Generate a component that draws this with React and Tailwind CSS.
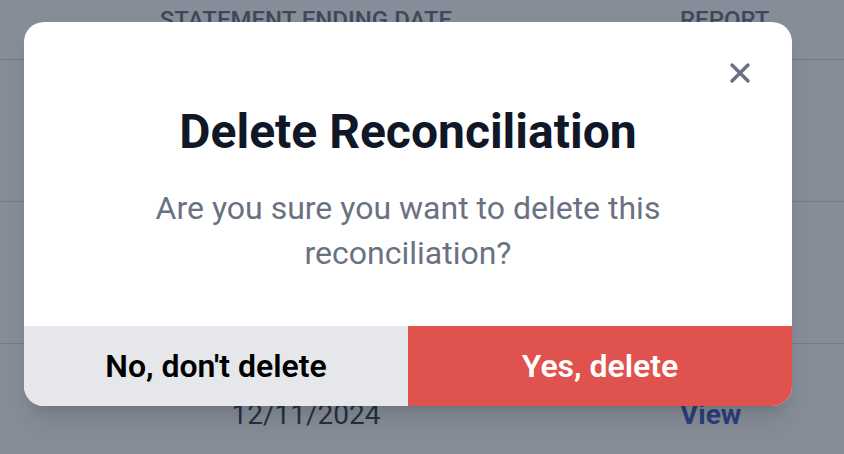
import React from 'react';

const rows = [
  { date: '', report: '' },
  { date: '', report: '' },
  { date: '12/11/2024', report: 'View' },
];

export default function App() {
  return (
    <div className="relative w-[844px] h-[454px] overflow-hidden bg-white font-['Roboto',sans-serif]">
      <div className="w-full">
        <div className="flex h-[60px] border-b border-gray-300">
          <div className="w-[612px] text-center text-[24px] font-medium text-gray-600 uppercase leading-none pt-[8px]">
            Statement Ending Date
          </div>
          <div className="flex-1 pl-[68px] text-[24px] font-medium text-gray-600 uppercase leading-none pt-[8px]">
            Report
          </div>
        </div>
        {rows.map((row, i) => (
          <div key={i} className="flex items-center h-[142px] border-b border-gray-300">
            <div className="w-[612px] text-center text-[28px] text-gray-900">{row.date}</div>
            <div className="flex-1 pl-[68px] text-[28px] font-bold text-blue-800">{row.report}</div>
          </div>
        ))}
      </div>

      <div className="absolute inset-0 bg-gray-700/60" />

      <div className="absolute left-[24px] top-[22px] w-[768px] bg-white rounded-[20px] overflow-hidden shadow-xl">
        <button className="absolute left-[704px] top-[39px] text-gray-500">
          <svg width="24" height="24" viewBox="0 0 24 24" fill="none" stroke="currentColor" strokeWidth="3.5" strokeLinecap="round">
            <path d="M4 4L20 20M20 4L4 20" />
          </svg>
        </button>
        <div className="pt-[82px] pb-[50px] px-10 text-center">
          <h2 className="text-[48px] leading-[56px] font-bold text-gray-900">Delete Reconciliation</h2>
          <p className="mt-[26px] mx-auto w-[620px] text-[32px] leading-[45px] text-gray-500">
            Are you sure you want to delete this reconciliation?
          </p>
        </div>
        <div className="flex h-[80px]">
          <button className="flex-1 bg-gray-200 text-black text-[32px] font-semibold">No, don't delete</button>
          <button className="flex-1 bg-[#df524e] text-white text-[32px] font-semibold">Yes, delete</button>
        </div>
      </div>
    </div>
  );
}
